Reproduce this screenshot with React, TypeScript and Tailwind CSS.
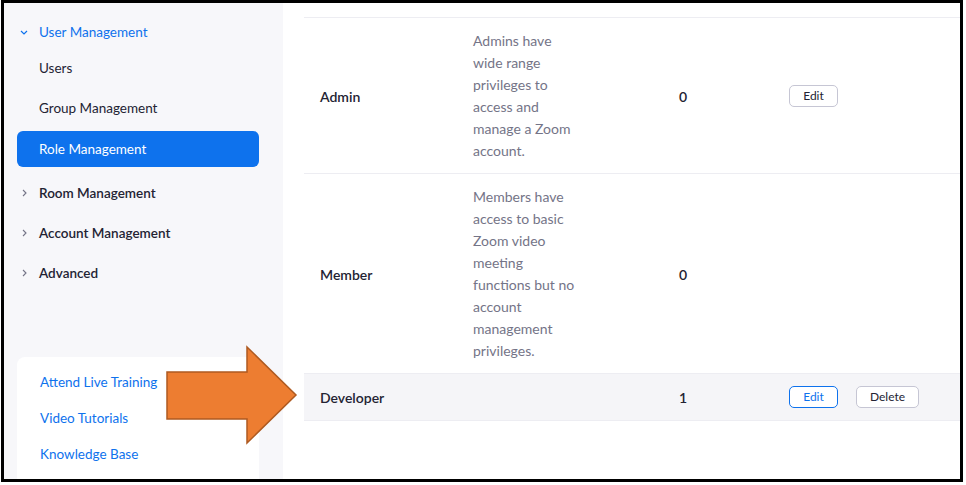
const blue = "text-[#0e72ed]"

function ChevronDown() {
  return (
    <svg width="8" height="5" viewBox="0 0 8 5" className="ml-[3px]">
      <path d="M1 1 L4 4 L7 1" fill="none" stroke="#0e72ed" strokeWidth="1.2" />
    </svg>
  )
}

function ChevronRight() {
  return (
    <svg width="5" height="8" viewBox="0 0 5 8" className="ml-[5px]">
      <path d="M1 1 L4 4 L1 7" fill="none" stroke="#747487" strokeWidth="1.1" />
    </svg>
  )
}

function NavItem({ label, h = "h-10", mt = "", bold = true, chevron = true }: { label: string; h?: string; mt?: string; bold?: boolean; chevron?: boolean }) {
  return (
    <div className={`flex shrink-0 items-center ml-[13px] mr-[24px] ${h} ${mt}`}>
      <div className="w-[22px] flex items-center">{chevron && <ChevronRight />}</div>
      <span className={`text-[13.5px] text-[#232333] ${bold ? "font-semibold" : ""}`}>{label}</span>
    </div>
  )
}

function Btn({ children, active = false, w }: { children: React.ReactNode; active?: boolean; w: string }) {
  return (
    <button
      className={`${w} h-[22px] rounded-[5px] border text-[12px] leading-none bg-white ${
        active ? "border-[#0e72ed] text-[#0e72ed]" : "border-[#c6c6d4] text-[#232333]"
      }`}
    >
      {children}
    </button>
  )
}

function Row({ name, desc, count, dev = false, edit = true }: { name: string; desc?: string; count: string; dev?: boolean; edit?: boolean }) {
  return (
    <div className={`flex items-center border-b border-[#ededf2] ${dev ? "bg-[#f5f5f8] h-[47px]" : "pt-3 pb-[11px]"}`}>
      <div className="w-[169px] pl-4 text-[14px] font-semibold text-[#232333]">{name}</div>
      <div className="w-[206px]">
        {desc && <p className="w-[108px] text-[14px] leading-[22px] text-[#747487]">{desc}</p>}
      </div>
      <div className="w-[110px] text-[14px] font-semibold text-[#232333]">{count}</div>
      <div className="flex items-center gap-[18px]">
        {edit && (
          <Btn w="w-[49px]" active={dev}>
            Edit
          </Btn>
        )}
        {dev && <Btn w="w-[63px]">Delete</Btn>}
      </div>
    </div>
  )
}

export default function App() {
  return (
    <div className="relative w-[966px] h-[485px] bg-white overflow-hidden" style={{ fontFamily: "Lato, 'Open Sans', sans-serif" }}>
      <div className="ml-px w-[962px] h-[482px] border-[3px] border-black flex overflow-hidden">
        <aside className="w-[279px] shrink-0 bg-[#f7f7fa] pt-[11px] flex flex-col">
          <div className="flex shrink-0 items-center ml-[13px] mr-[24px] h-9">
            <div className="w-[22px] flex items-center">
              <ChevronDown />
            </div>
            <span className={`text-[13.5px] ${blue}`}>User Management</span>
          </div>
          <NavItem label="Users" h="h-9" bold={false} chevron={false} />
          <NavItem label="Group Management" mt="mt-[2px]" bold={false} chevron={false} />
          <div className="flex shrink-0 items-center ml-[13px] mr-[24px] h-9 mt-[3px] rounded-[6px] bg-[#0e72ed] pl-[22px]">
            <span className="text-[13.5px] text-white">Role Management</span>
          </div>
          <NavItem label="Room Management" mt="mt-[6px]" />
          <NavItem label="Account Management" />
          <NavItem label="Advanced" />
          <div className="shrink-0 ml-[13px] mr-[24px] mt-[64px] bg-white rounded-lg pt-[7px] pb-4 pl-[23px] flex flex-col">
            {["Attend Live Training", "Video Tutorials", "Knowledge Base"].map((t) => (
              <span key={t} className={`h-9 flex items-center text-[13.5px] ${blue}`}>
                {t}
              </span>
            ))}
          </div>
        </aside>
        <main className="flex-1 pl-[21px] pt-[14px]">
          <div className="border-t border-[#ededf2]">
            <Row name="Admin" desc="Admins have wide range privileges to access and manage a Zoom account." count="0" />
            <Row
              name="Member"
              desc="Members have access to basic Zoom video meeting functions but no account management privileges."
              count="0"
              edit={false}
            />
            <Row name="Developer" count="1" dev />
          </div>
        </main>
      </div>
      <svg className="absolute left-[165px] top-[345px]" width="134" height="100" viewBox="0 0 134 100">
        <polygon points="2,27 82,27 82,2 131,50 82,98 82,74 2,74" fill="#ed7d31" stroke="#ae5a21" strokeWidth="1.5" strokeLinejoin="miter" />
      </svg>
    </div>
  )
}
